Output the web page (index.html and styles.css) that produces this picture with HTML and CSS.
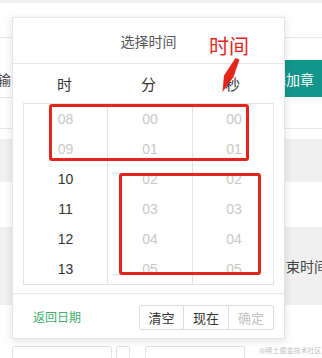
FILE: index.html
```html
<!DOCTYPE html>
<html lang="zh-CN">
<head>
  <meta charset="UTF-8">
  <meta name="viewport" content="width=device-width, initial-scale=1.0">
  <title>选择时间</title>
  <link rel="stylesheet" href="styles.css">
</head>
<body>
  <div class="page">
    <div class="topbar"></div>

    <div class="toolbar">
      <div class="field"><span class="field-label">输</span></div>
      <button class="btn-teal">添加章</button>
    </div>

    <div class="gap"></div>
    <div class="band"></div>
    <div class="blank"></div>
    <div class="band band-tall">结束时间</div>

    <div class="inputs">
      <div class="box box-wide"></div>
      <div class="box box-small"></div>
      <div class="box box-wide"></div>
    </div>

    <!-- time picker popup -->
    <div class="picker">
      <div class="picker-head">选择时间</div>
      <div class="picker-labels">
        <span>时</span><span>分</span><span>秒</span>
      </div>
      <div class="picker-table">
        <div class="col">
          <div class="cell off">08</div>
          <div class="cell off">09</div>
          <div class="cell">10</div>
          <div class="cell">11</div>
          <div class="cell">12</div>
          <div class="cell">13</div>
        </div>
        <div class="col">
          <div class="cell off">00</div>
          <div class="cell off">01</div>
          <div class="cell off">02</div>
          <div class="cell off">03</div>
          <div class="cell off">04</div>
          <div class="cell off">05</div>
        </div>
        <div class="col">
          <div class="cell off">00</div>
          <div class="cell off">01</div>
          <div class="cell off">02</div>
          <div class="cell off">03</div>
          <div class="cell off">04</div>
          <div class="cell off">05</div>
        </div>
      </div>
      <div class="picker-foot">
        <a class="back-link" href="#">返回日期</a>
        <div class="btn-group">
          <button class="btn">清空</button>
          <button class="btn">现在</button>
          <button class="btn btn-disabled">确定</button>
        </div>
      </div>
    </div>

    <!-- annotations -->
    <div class="mark mark-a"></div>
    <div class="mark mark-b"></div>
    <div class="note">时间</div>
    <svg class="arrow" width="322" height="358" viewBox="0 0 322 358">
      <polygon points="235.5,58 239.5,59.5 233.5,77 222.5,92 224,75.5" fill="#e3261c"/>
    </svg>

    <div class="watermark">@稀土掘金技术社区</div>
  </div>
</body>
</html>
```

FILE: styles.css
```css
body {
  margin: 0;
  padding: 0;
  background: #fff;
  color: #333;
  font-family: "Liberation Sans", "Noto Sans CJK SC", sans-serif;
  overflow: hidden;
}
.page {
  position: relative;
  width: 322px;
  height: 358px;
  overflow: hidden;
}
.topbar {
  height: 34px;
  border-top: 3px solid #f1f1f1;
  border-bottom: 1px solid #e6e6e6;
}
.toolbar {
  height: 90px;
  border-bottom: 1px solid #e6e6e6;
  display: flex;
  justify-content: space-between;
  align-items: flex-start;
}
.field {
  width: 100px;
  height: 59px;
  border-bottom: 1px solid #e6e6e6;
}
.field-label {
  display: block;
  margin-left: -3px;
  padding-top: 34px;
  line-height: 16px;
  font-size: 14px;
  color: #444;
}
.btn-teal {
  margin-top: 22px;
  width: 60px;
  height: 37px;
  padding: 0 0 0 10px;
  border: none;
  background: #13968a;
  color: #fff;
  font-family: "Noto Sans CJK SC", sans-serif;
  font-size: 14px;
  text-align: left;
  white-space: nowrap;
  overflow: hidden;
}
.gap {
  height: 10px;
}
.band {
  height: 43px;
  background: #f0f0f0;
}
.blank {
  height: 45px;
}
.band-tall {
  height: 78px;
  box-sizing: border-box;
  padding-left: 272px;
  line-height: 78px;
  font-family: "Noto Sans CJK SC", sans-serif;
  font-size: 14px;
  color: #444;
  white-space: nowrap;
  overflow: hidden;
}
.inputs {
  display: flex;
  margin-top: 41px;
  padding-left: 12px;
  gap: 4px;
}
.box {
  height: 20px;
  border: 1px solid #e2e2e2;
  border-radius: 2px;
}
.box-wide {
  width: 98px;
}
.box-small {
  width: 12px;
  margin-right: 11px;
}

/* picker */
.picker {
  position: absolute;
  left: 12px;
  top: 17px;
  width: 273px;
  height: 322px;
  box-sizing: border-box;
  border: 1px solid #e4e4e4;
  background: #fff;
  box-shadow: 0 2px 8px rgba(0, 0, 0, 0.12);
  display: flex;
  flex-direction: column;
}
.picker-head {
  height: 45px;
  border-bottom: 1px solid #e8e8e8;
  display: flex;
  align-items: center;
  justify-content: center;
  font-family: "Noto Sans CJK SC", sans-serif;
  font-size: 14px;
  color: #555;
}
.picker-labels {
  height: 39px;
  margin: 0 10px;
  display: grid;
  grid-template-columns: 83px 85px 83px;
  align-items: center;
  text-align: center;
  font-family: "Noto Sans CJK SC", sans-serif;
  font-size: 15px;
  color: #333;
}
.picker-table {
  margin: 0 10px;
  border: 1px solid #e2e2e2;
  display: grid;
  grid-template-columns: 83px 85px 83px;
}
.col + .col {
  border-left: 1px solid #e2e2e2;
}
.cell {
  height: 30px;
  line-height: 30px;
  text-align: center;
  font-size: 14px;
  color: #333;
}
.cell.off {
  color: #c8c8c8;
}
.picker-foot {
  margin-top: 8px;
  flex: 1;
  border-top: 1px solid #e8e8e8;
  display: flex;
  align-items: center;
  justify-content: space-between;
  padding: 0 10px 0 20px;
}
.back-link {
  text-decoration: none;
  color: #3fae6f;
  font-family: "Noto Sans CJK SC", sans-serif;
  font-size: 12px;
}
.btn-group {
  display: flex;
  margin-top: 2px;
}
.btn {
  width: 45px;
  height: 25px;
  padding: 0;
  border: 1px solid #dcdcdc;
  background: #fff;
  color: #333;
  font-family: "Noto Sans CJK SC", sans-serif;
  font-size: 13px;
}
.btn + .btn {
  border-left: none;
}
.btn:first-child {
  border-radius: 3px 0 0 3px;
}
.btn:last-child {
  border-radius: 0 3px 3px 0;
}
.btn-disabled {
  color: #c2c2c2;
}

/* annotations */
.mark {
  position: absolute;
  border: 3px solid #e3261c;
  border-radius: 3px;
  box-sizing: border-box;
}
.mark-a {
  left: 49px;
  top: 104px;
  width: 200px;
  height: 57px;
}
.mark-b {
  left: 119px;
  top: 173px;
  width: 142px;
  height: 102px;
}
.note {
  position: absolute;
  left: 209px;
  top: 33px;
  font-family: "Noto Sans CJK SC", sans-serif;
  font-size: 20px;
  line-height: 26px;
  color: #e3261c;
}
.arrow {
  position: absolute;
  left: 0;
  top: 0;
}
.watermark {
  position: absolute;
  left: 259px;
  top: 345px;
  font-family: "Noto Sans CJK SC", sans-serif;
  font-size: 7px;
  color: #c4c4c4;
  white-space: nowrap;
}
```
